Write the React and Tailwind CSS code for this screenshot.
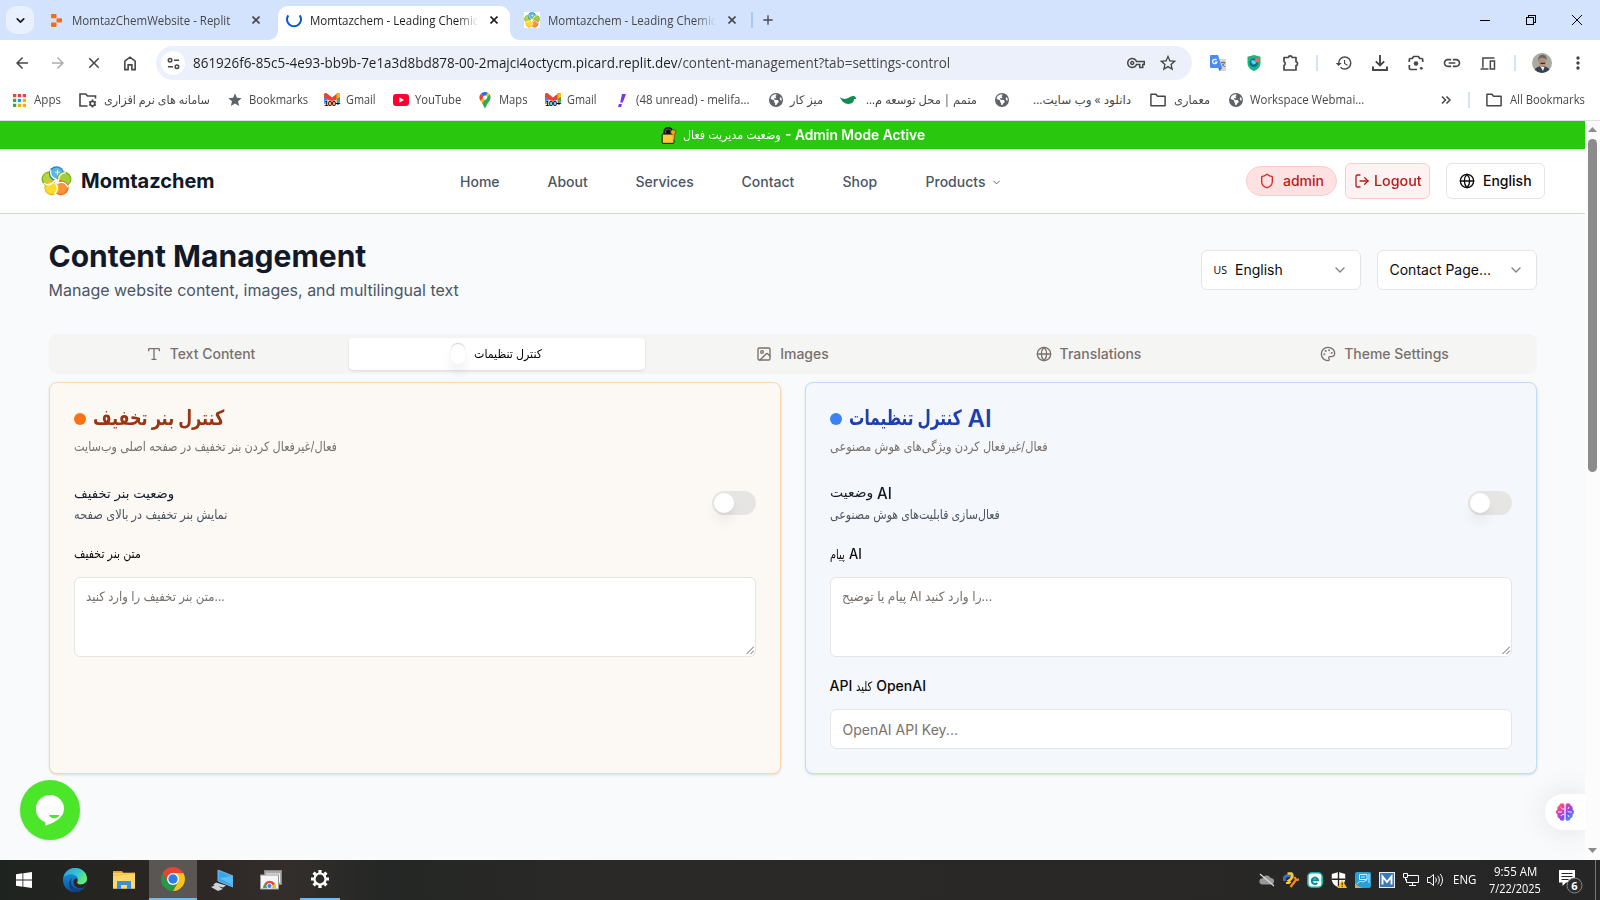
import React, { useLayoutEffect, useRef } from "react";
import { Type, Image as ImageIcon, Globe, Palette, Shield, LogOut, ChevronDown } from "lucide-react";
import {
  MdArrowBack, MdArrowForward, MdClose, MdStarBorder, MdStar, MdOutlineVpnKey,
  MdHistory, MdLink, MdMoreVert, MdAdd,
} from "react-icons/md";
import { FaEarthAmericas } from "react-icons/fa6";

// One line of text squeezed or stretched to the width of its box.
function Fit({ className = "", dir = "ltr", children }) {
  const box = useRef(null);
  const inner = useRef(null);
  useLayoutEffect(() => {
    const natural = inner.current.offsetWidth;
    if (natural) inner.current.style.transform = `scaleX(${box.current.clientWidth / natural})`;
  }, []);
  return (
    <span ref={box} dir="ltr" className={`block shrink-0 whitespace-nowrap ${className}`}>
      <span ref={inner} dir={dir} className="inline-block origin-left">{children}</span>
    </span>
  );
}

const ui = "font-['Open_Sans','DejaVu_Sans',sans-serif]";

const petals = [
  { angle: 288, rim: "#7fb51b", core: "#b5d63c" },
  { angle: 0, rim: "#2b86bd", core: "#5cb6e2" },
  { angle: 72, rim: "#7cb518", core: "#9fd03a" },
  { angle: 144, rim: "#ee6a1b", core: "#f9913f" },
  { angle: 216, rim: "#f2b90f", core: "#fbdc2c" },
];

// Pinwheel of five petals round a white hub.
function FlowerLogo({ className }) {
  return (
    <svg viewBox="0 0 32 32" className={className}>
      {petals.map((p) => (
        <g key={p.angle} transform={`rotate(${p.angle} 16 16.500)`}>
          <circle cx="16" cy="8.400" r="7.700" fill={p.rim} />
          <circle cx="16.300" cy="8.200" r="6.200" fill={p.core} />
        </g>
      ))}
      {petals.map((p) => (
        <path key={p.angle} transform={`rotate(${p.angle} 16 16.500)`} d="M10.200 4.500C9 9 11 13 16.500 14.500" fill="none" stroke="#fff" strokeWidth="1.300" />
      ))}
      <circle cx="16" cy="16.500" r="2.400" fill="#fffaf0" />
      <path d="M17 4.500v5.500M14.500 7h5" stroke="#e3f3fb" strokeWidth="1.100" />
    </svg>
  );
}

function ChromeLogo({ className }) {
  return (
    <svg viewBox="0 0 24 24" className={className}>
      <path d="M12 12 1.610 6A12 12 0 0 1 22.390 6z" fill="#ea4335" />
      <path d="M6.800 15 1.610 6 12 6z" fill="#ea4335" />
      <path d="M6.800 15 1.610 6A12 12 0 0 0 12 24l5.200-9z" fill="#2a9648" />
      <path d="M12 6h10.390A12 12 0 0 1 12 24l5.200-9z" fill="#fbc21a" />
      <circle cx="12" cy="12" r="6" fill="#fff" />
      <circle cx="12" cy="12" r="4.700" fill="#2f7de9" />
    </svg>
  );
}

function GmailIcon() {
  return (
    <div className="relative h-4 w-4 shrink-0">
      <svg viewBox="0 0 16 16" className="h-4 w-4">
        <path d="M0 3v9h3.500V5z" fill="#4285f4" />
        <path d="M12.500 5v7H16V3z" fill="#34a853" />
        <path d="M0 2.500V5l8 5.500L16 5V2.500C16 1 14.200.4 13 1.400L8 5.500 3 1.400C1.800.4 0 1 0 2.500z" fill="#ea4335" />
        <path d="M12.500 1.800 16 1v4l-3.500 2z" fill="#fbbc04" />
      </svg>
      <span className="absolute left-0 top-[7px] w-[17px] whitespace-nowrap font-['Liberation_Sans',sans-serif] text-[8px] font-bold leading-[10px] tracking-[-0.6px] text-black [text-shadow:0_0_1px_#fff,0_0_1px_#fff,0_0_2px_#fff]">100+</span>
    </div>
  );
}

function FolderGear() {
  return (
    <svg viewBox="0 0 18 16" className="h-4 w-[18px] shrink-0" fill="none" stroke="#474747" strokeWidth="1.600">
      <path d="M16.500 6.500V4H8.500L6.800 2H1v12h7.500" />
      <circle cx="13.500" cy="11.500" r="2.300" />
      <path d="M13.500 7.600v1.600M13.500 13.800v1.600M10.100 9.600l1.400.8M15.500 12.600l1.400.8M10.100 13.400l1.400-.8M15.500 10.400l1.400-.8" />
    </svg>
  );
}

const FolderIcon = () => (
  <svg viewBox="0 0 16 14" className="h-[14px] w-4 shrink-0" fill="none" stroke="#474747" strokeWidth="1.500">
    <path d="M.9 1.200h5l1.600 2h7.600v9.600H.9z" strokeLinejoin="round" />
  </svg>
);

const WebIcon = () => <FaEarthAmericas className="h-[14px] w-[14px] shrink-0 text-[#5f6368]" />;

function TabClose({ className }) {
  return (
    <svg viewBox="0 0 8 8" className={`h-2 w-2 shrink-0 ${className}`} fill="none" stroke="currentColor" strokeWidth="1.600">
      <path d="m.5.5 7 7m0-7-7 7" />
    </svg>
  );
}

function TabFlare({ className }) {
  return <svg viewBox="0 0 10 10" className={`h-[10px] w-[10px] shrink-0 self-end ${className}`}><path d="M0 10C6 10 10 6 10 0v10z" fill="#fff" /></svg>;
}

function TabStrip() {
  return (
    <div className="flex h-10 items-center bg-[#d3e3fd] text-xs text-[#474747]">
      <div className="ml-[6px] flex h-7 w-7 items-center justify-center rounded-[10px] bg-[#e9f0fe]">
        <ChevronDown className="h-[13px] w-[13px] text-[#1f1f1f]" strokeWidth={3.200} />
      </div>
      <svg viewBox="0 0 11 13" className="ml-[17px] h-[13px] w-[11px]" fill="#ff6a13">
        <rect x="0" y="0" width="5.500" height="4.300" rx=".8" />
        <rect x="5.500" y="4.300" width="5.500" height="4.300" rx=".8" />
        <rect x="0" y="8.600" width="5.500" height="4.300" rx=".8" />
      </svg>
      <Fit className="ml-[10px] w-[158px] pt-px">MomtazChemWebsite - Replit</Fit>
      <TabClose className="ml-[22px]" />
      <TabFlare className="ml-[8px]" />
      <div className="flex h-[34px] w-[232px] items-center self-end rounded-t-[10px] bg-white pb-[6px] text-[#1f1f1f]">
        <svg viewBox="0 0 16 16" className="ml-[8px] h-4 w-4" fill="none" stroke="#0b57d0" strokeWidth="2">
          <path d="M2.300 3.300a7 7 0 1 0 11.400 0" />
        </svg>
        <div className="ml-2 pt-px [mask-image:linear-gradient(to_right,#000_88%,transparent)]">
          <Fit className="w-[168px]">Momtazchem - Leading Chemic</Fit>
        </div>
        <TabClose className="ml-[12px]" />
      </div>
      <TabFlare className="-scale-x-100" />
      <FlowerLogo className="ml-[4px] h-4 w-4 bg-white" />
      <div className="ml-2 pt-px [mask-image:linear-gradient(to_right,#000_88%,transparent)]">
        <Fit className="w-[168px]">Momtazchem - Leading Chemic</Fit>
      </div>
      <TabClose className="ml-[12px]" />
      <div className="ml-[15px] h-4 w-[2px] bg-[#a8c7fa]" />
      <MdAdd className="ml-[7px] h-4 w-4" />
      <div className="ml-auto flex items-center text-black">
        <div className="mr-[36px] h-px w-[10px] bg-black" />
        <svg viewBox="0 0 10 10" className="mr-[36px] h-[10px] w-[10px]" fill="none" stroke="currentColor" shapeRendering="crispEdges">
          <path d="M.5 2.500h7v7h-7zM2.500 2.500v-2h7v7h-2" />
        </svg>
        <svg viewBox="0 0 10 10" className="mr-[18px] h-[10px] w-[10px]" fill="none" stroke="currentColor"><path d="m0 0 10 10M10 0 0 10" /></svg>
      </div>
    </div>
  );
}

function Toolbar() {
  return (
    <div className="flex h-[46px] items-center bg-white text-[#474747]">
      <MdArrowBack className="ml-[13px] h-[18px] w-[18px]" />
      <MdArrowForward className="ml-[18px] h-[18px] w-[18px] text-[#adadad]" />
      <MdClose className="ml-[18px] h-[18px] w-[18px]" />
      <svg viewBox="0 0 14 16" className="ml-[20px] h-[15px] w-[14px]" fill="none" stroke="currentColor" strokeWidth="1.700">
        <path d="M1.500 14.500v-9L7 1.300l5.500 4.200v9H9V9.500H5v5z" />
      </svg>
      <div className="ml-[19px] flex h-[34px] w-[1036px] items-center rounded-full bg-[#ebf0fa]">
        <div className="ml-[5px] flex h-6 w-6 items-center justify-center rounded-full bg-white">
          <svg viewBox="0 0 14 14" className="h-[13px] w-[13px]" fill="none" stroke="currentColor" strokeWidth="1.600">
            <circle cx="3.300" cy="3.500" r="1.900" /><path d="M7.500 3.500H13M1 10.500h5.500" /><circle cx="10.700" cy="10.500" r="1.900" />
          </svg>
        </div>
        <Fit className="ml-2 w-[757px] text-sm text-[#1f1f1f]">
          861926f6-85c5-4e93-bb9b-7e1a3d8bd878-00-2majci4octycm.picard.replit.dev<span className="text-[#474747]">/content-management?tab=settings-control</span>
        </Fit>
        <MdOutlineVpnKey className="ml-auto h-[18px] w-[18px]" />
        <MdStarBorder className="ml-[13px] mr-[14px] h-[20px] w-[20px]" />
      </div>
      <svg viewBox="0 0 16 16" className="ml-[18px] h-4 w-4">
        <path d="M7 4h9v12H9z" fill="#d3d6da" />
        <path d="M0 1.200C0 .5.5 0 1.200 0H8l4 13H1.200C.5 13 0 12.500 0 11.800z" fill="#4b8bf5" />
        <path d="M12 13H8.500l1 3z" fill="#3367d6" />
        <path d="M6.600 5.200a2.200 2.200 0 1 0 .3 2H5" fill="none" stroke="#fff" strokeWidth="1.200" />
        <path d="M11 7.500h4.500M13 6.500v1M14.500 7.500c-.5 2-1.500 3-2.500 4M12 8.500c.5 1.500 1.500 2.500 3 3.300" stroke="#6c7278" fill="none" />
      </svg>
      <svg viewBox="0 0 16 16" className="ml-[20px] h-4 w-4">
        <path d="M8 0 1.500 1.800v6C1.500 12 4.500 15 8 16c3.500-1 6.500-4 6.500-8.200v-6z" fill="#18b67a" />
        <circle cx="7.800" cy="7.800" r="4.300" fill="#0d6f96" />
        <path d="M5 6c2-2 3 0 4 0s2 2 0 3-3 0-4-3z" fill="#5ad0ff" />
        <circle cx="11" cy="5.300" r="2.200" fill="#f06a5e" />
      </svg>
      <svg viewBox="0 0 18 18" className="ml-[20px] h-[18px] w-[18px]" fill="none" stroke="currentColor" strokeWidth="1.700">
        <path d="M2 3.500h4.300a2 2 0 0 1 3.900 0H14v4.200a2 2 0 0 1 0 3.900v4.400H2v-4.500a2.300 2.300 0 0 0 0-4z" strokeLinejoin="round" />
      </svg>
      <div className="ml-[16px] h-4 w-[2px] bg-[#d3e3fd]" />
      <MdHistory className="ml-[17px] h-[18px] w-[18px]" />
      <svg viewBox="0 0 16 16" className="ml-[19px] h-4 w-4" fill="none" stroke="currentColor" strokeWidth="1.900">
        <path d="M8 0v10M3.800 6.300 8 10.500l4.200-4.200M1 11.500V15h14v-3.500" />
      </svg>
      <svg viewBox="0 0 16 16" className="ml-[20px] h-4 w-4" fill="none" stroke="currentColor" strokeWidth="1.700">
        <path d="M1.300 7V4.500c0-.6.400-1 1-1h2L5.500 1.500h5l1.200 2h2c.6 0 1 .4 1 1V7M1.300 10v3c0 .9.500 1.500 1.400 1.500H9" />
        <circle cx="8" cy="8.500" r="2.300" fill="currentColor" stroke="none" /><circle cx="13.300" cy="13.300" r="1.400" fill="currentColor" stroke="none" />
      </svg>
      <MdLink className="ml-[18px] h-5 w-5" />
      <svg viewBox="0 0 16 14" className="ml-[18px] h-[13px] w-4" fill="none" stroke="currentColor" strokeWidth="1.600">
        <path d="M15 1H2.500v10.500M0 12.800h8.500M10.500 4.300H15v8.500h-4.500z" />
      </svg>
      <div className="ml-[18px] h-4 w-[2px] bg-[#d3e3fd]" />
      <svg viewBox="0 0 20 20" className="ml-[16px] h-5 w-5 rounded-full">
        <rect width="20" height="20" fill="#a9aaa0" />
        <path d="M2 20c0-5 4-7 8-7s8 2 9 7z" fill="#384150" />
        <path d="m8 13 3 5 1.500-4z" fill="#eef1f3" />
        <ellipse cx="10.500" cy="8.500" rx="4" ry="5.200" fill="#b98e78" />
        <path d="M6.300 8C6 3.500 8 1.800 10.800 1.800S15 4 14.700 7c-1.500-2.500-6-3-7.400-1z" fill="#6b6561" />
        <path d="M8.500 10.300h4.500" stroke="#3a2c28" strokeWidth="1.200" />
      </svg>
      <MdMoreVert className="ml-[16px] h-5 w-5" />
    </div>
  );
}

function Bookmarks() {
  return (
    <div className="flex h-[34px] items-center bg-white pb-[6px] text-xs text-[#474747]">
      <svg viewBox="0 0 14 14" className="ml-[13px] h-[13px] w-[13px] shrink-0">
        <path d="M0 0h3.500v3.500H0zM5.200 0h3.500v3.500H5.200zM10.500 0H14v3.500h-3.500z" fill="#ea4335" />
        <path d="M0 5.200h3.500v3.500H0zM0 10.500h3.500V14H0z" fill="#34a853" />
        <path d="M5.200 5.200h3.500v3.500H5.200z" fill="#1a9bf0" />
        <path d="M10.500 5.200H14v3.500h-3.500zM5.200 10.500h3.500V14H5.200zM10.500 10.500H14V14h-3.500z" fill="#fbab05" />
      </svg>
      <Fit className="ml-[8px] w-[27px]">Apps</Fit>
      <div className="ml-[18px] flex"><FolderGear /></div>
      <Fit dir="rtl" className="ml-[7px] w-[106px]">سامانه های نرم افزاری</Fit>
      <MdStar className="ml-[17px] h-4 w-4 shrink-0 text-[#5f6368]" />
      <Fit className="ml-[6px] w-[59px]">Bookmarks</Fit>
      <div className="ml-[16px]"><GmailIcon /></div>
      <Fit className="ml-[6px] w-[30px]">Gmail</Fit>
      <svg viewBox="0 0 16 12" className="ml-[17px] h-3 w-4 shrink-0"><rect width="16" height="12" rx="3" fill="#f03" /><path d="m6.300 3.300 4.700 2.700-4.700 2.700z" fill="#fff" /></svg>
      <Fit className="ml-[6px] w-[46px]">YouTube</Fit>
      <svg viewBox="0 0 12 16" className="ml-[18px] h-4 w-3 shrink-0">
        <path d="M6 0a5.600 5.600 0 0 0-4.300 2L6 5.700 9 .9A5.600 5.600 0 0 0 6 0z" fill="#1a73e8" />
        <path d="M1.700 2C0 4 0 6.500 1.400 8.700L6 5.700z" fill="#ea4335" />
        <path d="M1.400 8.700 3 11l7.700-8.800L9 .9z" fill="#fbbc04" />
        <path d="M3 11c1.500 2 2 5 3 5s1.300-3 3-5 2.600-3.500 2.600-5.400c0-1.200-.3-2.400-.9-3.400z" fill="#34a853" />
        <circle cx="6" cy="5.600" r="2.100" fill="#fff" />
      </svg>
      <Fit className="ml-[8px] w-[29px]">Maps</Fit>
      <div className="ml-[17px]"><GmailIcon /></div>
      <Fit className="ml-[6px] w-[30px]">Gmail</Fit>
      <svg viewBox="0 0 8 13" className="ml-[21px] h-[13px] w-2 shrink-0" fill="#7b2ff7"><path d="M4 0h4L4.800 8.500H2.200zM0 13l1-3h3l-1 3z" /></svg>
      <Fit className="ml-[10px] w-[113px]">(48 unread) - melifa...</Fit>
      <div className="ml-[20px]"><WebIcon /></div>
      <Fit dir="rtl" className="ml-[7px] w-[33px]">میز کار</Fit>
      <svg viewBox="0 0 16 8" className="ml-[17px] h-2 w-4 shrink-0"><path d="M0 1c2 2 4 2 6 1.800C9 2 11 0 13.500 0 15.500 0 16 1.500 16 3H14c0 2-1 3.500-3 4.500C6 9 1.500 6 0 1z" fill="#0b8f4d" /></svg>
      <Fit dir="rtl" className="ml-[10px] w-[111px]">متمم | محل توسعه م...</Fit>
      <div className="ml-[18px]"><WebIcon /></div>
      <Fit dir="rtl" className="ml-[24px] w-[98px]">دانلود » وب سایت...</Fit>
      <div className="ml-[19px]"><FolderIcon /></div>
      <Fit dir="rtl" className="ml-[8px] w-[36px]">معماری</Fit>
      <div className="ml-[19px]"><WebIcon /></div>
      <Fit className="ml-[7px] w-[114px]">Workspace Webmai...</Fit>
      <svg viewBox="0 0 10 8" className="ml-auto h-2 w-[10px] shrink-0" fill="none" stroke="currentColor" strokeWidth="1.500"><path d="m1 .5 3.500 3.500L1 7.500M5.500.5 9 4 5.500 7.500" /></svg>
      <div className="ml-[17px] h-4 w-[2px] shrink-0 bg-[#d3e3fd]" />
      <div className="ml-[16px]"><FolderIcon /></div>
      <Fit className="ml-[8px] mr-[15px] w-[75px]">All Bookmarks</Fit>
    </div>
  );
}

function SiteHeader() {
  return (
    <>
      <div className="flex h-7 items-center justify-center bg-[#29c70d] text-sm font-semibold text-white">
        <svg viewBox="0 0 16 18" className="h-[17px] w-4">
          <path d="M3 8V5a4.200 4.200 0 0 1 8.400 0v3" fill="#111" stroke="#111" strokeWidth="1.800" />
          <path d="M4.300 7V5a3 3 0 0 1 6 0v2" fill="none" stroke="#999" strokeWidth=".7" />
          <rect x=".8" y="7.500" width="12.500" height="9.800" rx="1" fill="#ffc83d" stroke="#111" strokeWidth="1" />
          <circle cx="12.500" cy="5.500" r="2.800" fill="#f9a01b" stroke="#111" strokeWidth=".6" />
          <path d="M11.800 7.500h1.800v6l-1-.8-.8.800z" fill="#f9a01b" />
        </svg>
        <Fit className="ml-[6px] w-[98px] text-xs font-normal">وضعیت مدیریت فعال</Fit>
        <Fit className="ml-[4px] w-[140px]">- Admin Mode Active</Fit>
      </div>
      <header className="flex h-[65px] items-center border-b border-[#fecaca] bg-white pl-[41px] pr-[40px] text-sm font-medium text-[#4b5563]">
        <FlowerLogo className="h-8 w-[31px]" />
        <Fit className="ml-[9px] w-[134px] text-xl font-bold text-[#111827]">Momtazchem</Fit>
        <nav className="ml-[245px] flex items-center gap-12 pt-[2px]">
          <span className="w-[39.5px]">Home</span>
          <span className="w-10">About</span>
          <span className="w-[58px]">Services</span>
          <span className="w-[53px]">Contact</span>
          <span className="w-[35px]">Shop</span>
          <span className="flex items-center gap-[5px] pb-px"><Fit className="w-[60px]">Products</Fit><ChevronDown className="mt-[2px] h-[11px] w-[11px]" /></span>
        </nav>
        <div className="ml-auto flex items-center text-[#b91c1c]">
          <div className="flex h-[30px] w-[91px] items-center rounded-full border border-[#fecaca] bg-[#fee2e2] pl-3">
            <Shield className="h-4 w-4 text-[#dc2626]" />
            <span className="ml-[8px]">admin</span>
          </div>
          <div className="ml-2 flex h-9 w-[85px] items-center rounded-md border border-[#fecaca] bg-[#fef2f2] pl-[8px]">
            <LogOut className="h-4 w-4" />
            <Fit className="ml-[4px] w-[48px]">Logout</Fit>
          </div>
          <div className="ml-4 flex h-9 w-[99px] items-center rounded-md border border-[#e7e5e4] bg-white pl-3 text-[#0c0a09]">
            <Globe className="h-4 w-4" />
            <span className="ml-2">English</span>
          </div>
        </div>
      </header>
    </>
  );
}

function Select({ children }) {
  return (
    <div className="flex h-10 w-40 items-center justify-between rounded-md border border-[#e7e5e4] bg-white px-3 text-sm text-[#0c0a09]">
      {children}
      <ChevronDown className="h-4 w-4 opacity-50" />
    </div>
  );
}

function TabItem({ icon: Icon, children }) {
  return (
    <div className="flex items-center justify-center gap-2">
      <Icon className="h-4 w-4" />
      <span>{children}</span>
    </div>
  );
}

function Switch() {
  return (
    <div className="flex h-6 w-11 items-center rounded-full bg-[#e7e5e4] p-[2px]">
      <div className="h-5 w-5 rounded-full bg-white shadow-lg" />
    </div>
  );
}

function TextArea({ children }) {
  return (
    <div className="flex h-20 items-start justify-between rounded-md border border-[#e7e5e4] bg-white pl-[11px] pt-2 text-sm text-[#78716c]">
      {children}
      <svg viewBox="0 0 8 8" className="mb-[2px] mr-[1px] h-2 w-2 self-end" stroke="#555" strokeWidth=".9"><path d="M.5 8 8 .5M4.500 8 8 4.500" /></svg>
    </div>
  );
}

function PageBody() {
  return (
    <main className="flex-1 bg-[#f9fafc] px-[48.5px] pt-9">
      <div className="flex h-10 items-center justify-between">
        <div className="pb-px">
          <h1 className="text-3xl font-bold leading-9 text-[#111827]"><Fit className="w-[318px]">Content Management</Fit></h1>
          <p className="mt-1 text-base leading-6 text-[#4b5563]"><Fit className="w-[410px]">Manage website content, images, and multilingual text</Fit></p>
        </div>
        <div className="flex gap-4">
          <Select><span className="flex items-center"><Fit className="w-[13px] pt-px font-['Open_Sans',sans-serif] text-[10.5px] text-black">US</Fit><span className="ml-[8.5px]">English</span></span></Select>
          <Select><span>Contact Page...</span></Select>
        </div>
      </div>

      <div className="mt-11 grid h-10 grid-cols-5 rounded-lg bg-[#f5f5f4] p-1 text-sm font-medium text-[#78716c]">
        <TabItem icon={Type}>Text Content</TabItem>
        <div className="flex items-center justify-center rounded bg-white text-black shadow-sm">
          <div className="h-5 w-[14px] rounded-full bg-white shadow-[0_8px_12px_rgba(0,0,0,0.07),1px_-2px_1px_-1px_rgba(0,0,0,0.12),-1px_-2px_1px_-1px_rgba(0,0,0,0.12)]" />
          <Fit className="ml-[9px] w-[68px] pb-px text-xs font-normal">کنترل تنظیمات</Fit>
        </div>
        <TabItem icon={ImageIcon}>Images</TabItem>
        <TabItem icon={Globe}>Translations</TabItem>
        <TabItem icon={Palette}>Theme Settings</TabItem>
      </div>

      <div className="mt-2 grid h-[392px] grid-cols-2 gap-6">
        <section className="rounded-lg border border-[#fed7aa] bg-[#fcf9f5] px-6 pt-5 shadow-sm">
          <div className="flex h-8 items-center gap-[7px]">
            <div className="h-3 w-3 rounded-full bg-[#f97316]" />
            <Fit className="w-[131px] pb-[2px] text-[21px] font-semibold leading-7 text-[#9a3412]">کنترل بنر تخفیف</Fit>
          </div>
          <Fit className="mt-px w-[263px] text-[13px] leading-5 text-[#78716c]">فعال/غیرفعال کردن بنر تخفیف در صفحه اصلی وب‌سایت</Fit>
          <div className="mt-[25px] flex items-center justify-between">
            <div>
              <Fit className="w-[100px] text-[13px] leading-6 text-[#111827]">وضعیت بنر تخفیف</Fit>
              <Fit className="-mt-px mb-px w-[153px] text-[13px] leading-5 text-[#4b5563]">نمایش بنر تخفیف در بالای صفحه</Fit>
            </div>
            <Switch />
          </div>
          <Fit className="mt-[18px] w-[67px] text-[13px] leading-5 text-[#0c0a09]">متن بنر تخفیف</Fit>
          <div className="mt-[14px]">
            <TextArea><Fit className="w-[139px] text-[13px] leading-5">متن بنر تخفیف را وارد کنید...</Fit></TextArea>
          </div>
        </section>

        <section className="rounded-lg border border-[#bfdbfe] bg-[#f4f7fc] px-6 pt-5 shadow-sm">
          <div className="flex h-8 items-center gap-[7px]">
            <div className="h-3 w-3 rounded-full bg-[#3b82f6]" />
            <Fit className="w-[113px] pb-[2px] text-[21px] font-semibold leading-7 text-[#1e40af]">کنترل تنظیمات</Fit>
            <span className="-ml-px text-2xl font-semibold leading-8 text-[#1e40af]">AI</span>
          </div>
          <Fit className="mt-px w-[218px] text-[13px] leading-5 text-[#78716c]">فعال/غیرفعال کردن ویژگی‌های هوش مصنوعی</Fit>
          <div className="mt-[25px] flex items-center justify-between">
            <div>
              <div className="flex h-6 items-center gap-1 text-[#111827]">
                <Fit className="w-[43px] text-[13px]">وضعیت</Fit>
                <Fit className="w-[15px] text-base font-medium">AI</Fit>
              </div>
              <Fit className="-mt-px mb-px w-[170px] text-[13px] leading-5 text-[#4b5563]">فعال‌سازی قابلیت‌های هوش مصنوعی</Fit>
            </div>
            <Switch />
          </div>
          <div className="mt-[19px] flex h-5 items-center gap-1 text-sm font-medium text-[#0c0a09]">
            <Fit className="w-[15px] text-[13px] font-normal">پیام</Fit><Fit className="w-[13px]">AI</Fit>
          </div>
          <div className="mt-[13px]">
            <TextArea><Fit className="w-[150px] text-[13px] leading-5">پیام یا توضیح AI را وارد کنید...</Fit></TextArea>
          </div>
          <div className="mt-[19px] flex h-5 items-center gap-1 text-sm font-medium text-[#0c0a09]">
            <span>API</span><Fit className="w-[16px] text-[13px] font-normal">کلید</Fit><span>OpenAI</span>
          </div>
          <div className="mt-[13px] flex h-10 items-center rounded-md border border-[#e7e5e4] bg-white pl-3 pt-px text-sm text-[#78716c]">OpenAI API Key...</div>
        </section>
      </div>
    </main>
  );
}

function Scrollbar() {
  return (
    <div className="flex w-[15px] flex-col items-center bg-[#fcfcfc]">
      <svg viewBox="0 0 9 5" className="mt-[6px] h-[5px] w-[9px]" fill="#8b8b8b"><path d="M4.500 0 9 5H0z" /></svg>
      <div className="mt-[7px] h-[333px] w-[9px] rounded-full bg-[#8b8b8b]" />
      <svg viewBox="0 0 9 5" className="mb-[7px] mt-auto h-[5px] w-[9px]" fill="#8b8b8b"><path d="M0 0h9L4.500 5z" /></svg>
    </div>
  );
}

function Taskbar() {
  return (
    <div className={`flex h-10 items-center bg-[linear-gradient(90deg,#1e231f_0%,#2a2523_10%,#332e2b_18%,#242725_24%,#2b2927_40%,#262626_100%)] text-white ${ui}`}>
      <svg viewBox="0 0 16 16" className="ml-4 h-4 w-4" fill="#fff"><path d="M0 2.200 6.500 1.300v6.300H0zM7.300 1.200 16 0v7.600H7.300zM0 8.400h6.500v6.300L0 13.800zM7.300 8.400H16V16l-8.700-1.200z" /></svg>
      <svg viewBox="0 0 24 24" className="ml-[31px] h-6 w-6">
        <defs>
          <linearGradient id="edgeTop" x1="0" y1="0" x2="1" y2=".5"><stop offset="0" stopColor="#229fe0" /><stop offset=".6" stopColor="#35c5d0" /><stop offset="1" stopColor="#66eb6e" /></linearGradient>
          <linearGradient id="edgeLow" x1="0" y1="0" x2="0" y2="1"><stop offset="0" stopColor="#1b9de2" /><stop offset="1" stopColor="#0f4f9e" /></linearGradient>
        </defs>
        <circle cx="12" cy="12" r="12" fill="url(#edgeLow)" />
        <path d="M.3 10C1.500 4 6.300 0 12 0c7 0 12 5 12 10.500 0 4-3 6-6 6-2.500 0-4-1-4-1.800 0-.8 1-1.200 1-3C15 8.500 11.500 6.200 8 6.200 4.500 6.200 1.500 8 .3 10z" fill="url(#edgeTop)" />
        <path d="M9.500 9.500c-3 3.500-1.500 11 6 11.500 2.500.2 4.500-.6 6-1.800-2 3-5.500 4.800-9.500 4.800C6 23.500 3.500 14 9.500 9.500z" fill="#123f83" />
        <path d="M14 14.700c0 .8 1.500 1.800 4 1.800 2.300 0 4.600-1.200 5.500-3.400.3 2.500-.3 4.400-2 6.100-5 2.500-11 .3-11-5.200 0-2 1-3.500 3.500-3.500 1 1.700 0 3.400 0 4.200z" fill="#2a2624" />
      </svg>
      <svg viewBox="0 0 22 18" className="ml-[26px] h-[18px] w-[22px]">
        <path d="M0 0h9l1.500 2.500H0z" fill="#e5a50a" /><rect y="1.800" width="22" height="16" rx=".6" fill="#ffd76a" />
        <path d="M0 3.500 10 2.500 22 1.800V3L0 5z" fill="#f7c34a" />
        <path d="M4 10h14v8h-4v-4H8v4H4z" fill="#3c8fd9" />
      </svg>
      <div className="ml-[14px] flex h-10 w-12 items-center justify-center border-b-2 border-[#76b9ed] bg-[#595653]"><ChromeLogo className="h-6 w-6" /></div>
      <svg viewBox="0 0 22 21" className="ml-[14px] h-[21px] w-[22px]">
        <path d="M7 0 22 6v11L7 11z" fill="#35a4ea" stroke="#8fcdf3" strokeWidth=".8" />
        <path d="m8 8 13-2v9z" fill="#5bbcf5" />
        <path d="m5 12.500 10 3-3 2-10-2.500zM0 17l5-2 7 4-5 2z" fill="#cfd4d8" />
      </svg>
      <svg viewBox="0 0 22 20" className="ml-[27px] h-5 w-[22px]">
        <rect x="4.500" y=".5" width="17" height="14" fill="#aaa" stroke="#888" /><rect x="6" y="3.500" width="14" height="9" fill="#f1f1f1" />
        <rect x=".5" y="5" width="18" height="14" fill="#f5f5f5" stroke="#999" />
        <path d="M3 18a6.500 6.500 0 0 1 13 0z" fill="#34a853" /><path d="M4.500 13.500a6.500 6.500 0 0 1 10.500 0L9.500 18z" fill="#ea4335" /><path d="M15 13.500c.7 1 1 2.500 1 4.500H9.500z" fill="#fbbc04" />
        <circle cx="9.500" cy="16" r="2.600" fill="#4285f4" stroke="#fff" />
      </svg>
      <div className="ml-[18px] flex h-10 w-10 items-center justify-center border-b-2 border-[#76b9ed]">
        <svg viewBox="0 0 20 20" className="h-5 w-5" fill="none" stroke="#fff">
          <circle cx="10" cy="10" r="5.500" strokeWidth="2.200" />
          <path d="M10 1v3M10 16v3M1 10h3M16 10h3M3.600 3.600l2.200 2.200M14.200 14.200l2.200 2.200M3.600 16.400l2.200-2.200M14.200 5.800l2.200-2.200" strokeWidth="3.200" />
        </svg>
      </div>
      <div className="ml-auto flex items-center gap-2">
        <svg viewBox="0 0 16 16" className="h-4 w-4"><path d="M3.500 12.500a3 3 0 0 1-.2-6A4.500 4.500 0 0 1 11.500 6a3.300 3.300 0 0 1 1 6.500z" fill="#999" /><path d="m1 2 14 12" stroke="#ddd" strokeWidth="1.200" /></svg>
        <svg viewBox="0 0 16 16" className="h-4 w-4" fill="none">
          <path d="M2 9 1 6.500 3 4l5-.5 2-2" stroke="#3f6fc0" strokeWidth="3" strokeLinejoin="round" />
          <path d="M4.500 1.500h4l1 3-2 3-3 2" stroke="#f6cb34" strokeWidth="2.600" strokeLinejoin="round" />
          <path d="m7.500 15 5.500-7M11.500 5l1.500 3 3-.5" stroke="#f58220" strokeWidth="2.400" />
          <path d="M3 11h3l1.500-1.500" stroke="#f6cb34" strokeWidth="2.200" />
        </svg>
        <svg viewBox="0 0 16 16" className="h-4 w-4"><rect x=".8" y=".8" width="14.400" height="14.400" rx="4" fill="#fff" stroke="#15a9a3" strokeWidth="1.600" /><path d="M4.800 8.300h6.300A3.200 3.200 0 1 0 10.300 11" fill="none" stroke="#0a8c98" strokeWidth="2" /></svg>
        <svg viewBox="0 0 16 16" className="h-4 w-4"><path d="M7.500 0 .8 2v5c0 4 3 7 6.700 8.500C11 14 14.200 11 14.200 7V2z" fill="#fff" /><path d="M7.500 0v15M1 7.300h13" stroke="#26231f" strokeWidth="1.400" /><path d="m11 7.500 5 8.500H6.500z" fill="#fdc20f" /><path d="M11.200 10.500v2.700M11.200 14v1" stroke="#222" /></svg>
        <svg viewBox="0 0 16 16" className="h-4 w-4"><rect width="16" height="16" rx="2" fill="#2a9fd8" /><path d="M4.500 2.500H12v5H4.500zM2 12c2-3 4-3 6-2l4-2M14 2v9M6 5h4" stroke="#cdeeff" fill="none" /><path d="M0 16V11c2 3 5 4.500 9 5z" fill="#e8a35b" /></svg>
        <svg viewBox="0 0 16 16" className="h-4 w-4"><rect x=".5" y=".5" width="15" height="15" fill="#3b78b8" stroke="#e8eef4" /><path d="M3.500 12.500v-8L8 10l4.500-5.500v8" stroke="#fff" strokeWidth="1.900" fill="none" /></svg>
        <svg viewBox="0 0 16 16" className="h-4 w-4" fill="none" stroke="#fff"><path d="M5 3.500h10.500v7H3.500V7M9.500 10.500v3M6 13.500h7M.5 1.500h4v4h-4zM2.500 5.500v3" /></svg>
        <svg viewBox="0 0 17 16" className="h-4 w-[17px]" fill="none" stroke="#fff"><path d="M.5 5.500H3l3.500-3v11L3 10.500H.5zM8.500 5.500c1 1.500 1 3.500 0 5M10.800 3.800c2 2.500 2 6 0 8.500M13.200 2c3 3.500 3 8.500 0 12" /></svg>
      </div>
      <Fit className="ml-[9px] w-[23px] text-xs">ENG</Fit>
      <div className="ml-[13px] flex w-[52px] flex-col items-center pb-px text-xs leading-[17px]">
        <Fit className="w-[43px]">9:55 AM</Fit>
        <Fit className="w-[52px]">7/22/2025</Fit>
      </div>
      <svg viewBox="0 0 25 25" className="ml-[17px] mr-[12px] mt-[3px] h-[25px] w-[25px]">
        <path d="M1 1h16v12.500H8L4.500 17v-3.500H1z" fill="#fff" /><path d="M3.500 4.500h11M3.500 7.500h11M3.500 10.500h7" stroke="#282828" />
        <circle cx="16.500" cy="16.500" r="7.500" fill="#2b2b2b" stroke="#8a8a8a" />
        <text x="16.500" y="20.500" fontSize="11" fontWeight="700" textAnchor="middle" fill="#fff">6</text>
      </svg>
      <div className="mr-1 h-10 w-px bg-[#777]" />
    </div>
  );
}

export default function App() {
  return (
    <div className="relative flex h-[900px] w-[1600px] flex-col overflow-hidden bg-white">
      <div className={`h-[120px] ${ui}`}>
        <TabStrip />
        <Toolbar />
        <Bookmarks />
      </div>
      <div className="h-px bg-[#dcdfe3]" />
      <div className="flex h-[739px]">
        <div className="relative flex w-[1585px] flex-col overflow-hidden font-['Inter','DejaVu_Sans',sans-serif]">
          <SiteHeader />
          <PageBody />
          <div className="absolute bottom-5 left-5 flex h-[60px] w-[60px] items-center justify-center rounded-full bg-[#4be62a] shadow-sm">
            <svg viewBox="0 0 28 31" className="h-[31px] w-7">
              <path d="M14 0a14 14 0 0 1 14 14c0 8-8 13-18.500 16.800l-.3-3.600A14 14 0 0 1 14 0z" fill="#fff" />
              <path d="M12.800 20h10.500c-1.500 4.300-8.500 4.300-10.500 0z" fill="#4be62a" />
            </svg>
          </div>
          <div className="absolute bottom-[30px] right-0 flex h-9 w-10 items-center rounded-l-full bg-white pl-[11px] shadow-[0_0_30px_rgba(0,0,0,0.1)]">
            <svg viewBox="0 0 18 18" className="h-[18px] w-[18px]">
              <defs><linearGradient id="brain" x1="0" y1="0" x2="1" y2="1"><stop offset="0" stopColor="#ff8a2a" /><stop offset=".28" stopColor="#ef3fa6" /><stop offset=".6" stopColor="#7c4df5" /><stop offset="1" stopColor="#22b8f5" /></linearGradient></defs>
              <path d="M8.400 1.500C7-.5 3.500 0 3.300 2.600 1.500 3.200 1 5 1.500 6.500c-2 1.300-2 3.700 0 5-.5 2 .5 3.300 1.900 3.800C4 18.300 7.500 18.500 8.400 16.500zM9.600 1.500C11-.5 14.500 0 14.700 2.600c1.800.6 2.300 2.400 1.800 3.900 2 1.300 2 3.700 0 5 .5 2-.5 3.300-1.900 3.800-.6 3-4.100 3.200-5 1.200z" fill="url(#brain)" />
              <path d="M2 9h4M5 4.500c.5 1.500 1.500 1.500 3 1.500M5 13c.5-1.500 1.500-1.500 3-1.500M16 9h-3l-1.500-1M13 4l-1 2M13 14l-1-2" fill="none" stroke="#fff" strokeWidth=".9" />
            </svg>
          </div>
        </div>
        <Scrollbar />
      </div>
      <Taskbar />
    </div>
  );
}
